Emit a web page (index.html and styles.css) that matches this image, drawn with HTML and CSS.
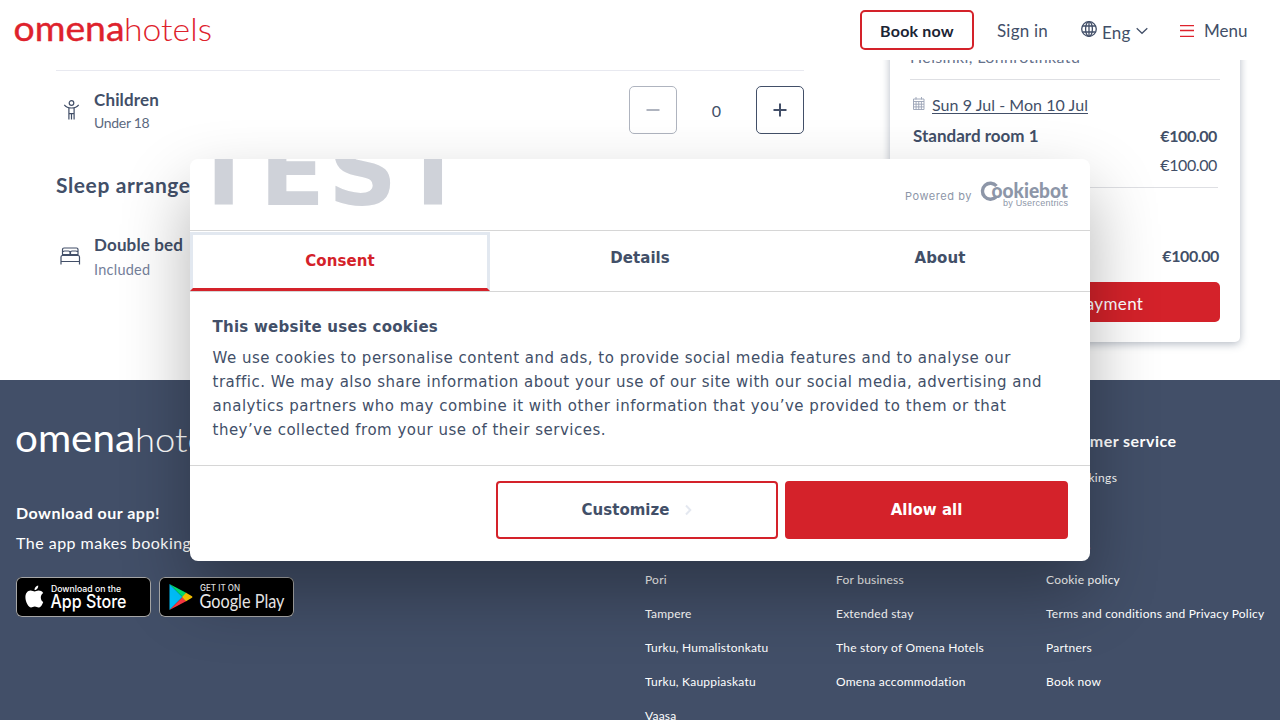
FILE: index.html
```html
<!DOCTYPE html>
<html lang="en">
<head>
<meta charset="utf-8">
<title>Omena Hotels</title>
<link rel="stylesheet" href="styles.css">
</head>
<body>
<header class="topbar">
  <svg class="logo" width="200" height="30" viewBox="0 0 200 30" role="img" aria-label="omenahotels">
    <text class="logo-bold" x="-.5" y="26" textLength="111" lengthAdjust="spacingAndGlyphs">omena</text>
    <text class="logo-thin" x="110" y="26" textLength="88" lengthAdjust="spacingAndGlyphs">hotels</text>
  </svg>
  <nav class="nav">
    <a class="book">Book now</a>
    <a class="signin">Sign in</a>
    <a class="lang">
      <svg width="16" height="16" viewBox="0 0 16 16" class="line globe"><circle cx="8" cy="8" r="7.3"/><ellipse cx="8" cy="8" rx="3.4" ry="7.3"/><path d="M8 .7v14.6M1.600 5h12.800M1.600 11h12.800"/></svg>
      <span class="lang-name">Eng</span>
      <svg width="12" height="8" viewBox="0 0 12 8" class="line"><path d="M.7 1.200 6 6.300l5.300-5.100"/></svg>
    </a>
    <a class="menu">
      <svg width="14" height="12" viewBox="0 0 14 12" class="line red"><path d="M0 .5h14M0 5.500h14M0 11.500h14"/></svg>
      <span>Menu</span>
    </a>
  </nav>
</header>

<main class="page">
  <section class="rooms">
    <div class="row guests">
      <svg class="kid line" width="17" height="22" viewBox="0 0 17 22"><circle cx="8.500" cy="4" r="2.300"/><path d="M1.300 5.800c2 2.700 4 3.200 7.200 3.200s5.200-.5 7.200-3.200M5.900 8.800V20.500M11.100 8.800V20.500M8.500 15v5.500M5.900 14.700h5.200"/></svg>
      <div class="label"><b>Children</b><small class="t-under">Under 18</small></div>
      <div class="stepper">
        <button class="step off"><svg width="14" height="14" viewBox="0 0 14 14"><path d="M.5 7h13"/></svg></button>
        <span>0</span>
        <button class="step"><svg width="14" height="14" viewBox="0 0 14 14"><path d="M.5 7h13M7 .5v13"/></svg></button>
      </div>
    </div>
    <h2>Sleep arrangements</h2>
    <div class="row bed">
      <svg class="line" width="21" height="18" viewBox="0 0 21 18"><path d="M2.500 9V2.500a1.500 1.500 0 0 1 1.500-1.500h12.500a1.500 1.500 0 0 1 1.500 1.500V9M3 5c0-.8.6-1 1.500-1h4c.8 0 1.500.2 1.500 1v1.500H10.500V5c0-.8.6-1 1.500-1h4c.9 0 1.500.3 1.500 1M2.500 7.500h15.500M1 17.500V10c0-1 .6-1.500 1.500-1.500h15.500c1 0 1.500.5 1.500 1.500v7.500M1 14.500h18.500"/></svg>
      <div class="label"><b>Double bed</b><small>Included</small></div>
    </div>
  </section>
  <aside class="card">
    <p class="place">Helsinki, Lönnrotinkatu</p>
    <p class="dates">
      <svg width="12" height="13" viewBox="0 0 12 13"><path d="M.5 2h10.500v10.500H.5zM.5 4.500h10.500M.5 7.200h10.500M.5 9.900h10.500M3.100 4.500v8M5.750 4.500v8M8.400 4.500v8M3 0v2.500M8.500 0v2.500"/></svg>
      <u>Sun 9 Jul - Mon 10 Jul</u>
    </p>
    <p class="line-item strong"><span class="t-room">Standard room 1</span><span class="price">€100.00</span></p>
    <p class="line-item sub"><span>1 night</span><span class="price">€100.00</span></p>
    <p class="line-item total"><span>Total</span><span class="price">€100.00</span></p>
    <button class="pay">Proceed to payment</button>
  </aside>
</main>

<footer class="footer">
  <section class="about">
    <svg class="logo white" width="214" height="30" viewBox="0 0 214 30" role="img" aria-label="omenahotels">
      <text class="logo-bold" x="-1" y="24" textLength="120" lengthAdjust="spacingAndGlyphs">omena</text>
      <text class="logo-thin" x="119" y="24" textLength="95" lengthAdjust="spacingAndGlyphs">hotels</text>
    </svg>
    <h3>Download our app!</h3>
    <p>The app makes booking easy</p>
    <div class="stores">
      <a class="store"><svg width="135" height="40" viewBox="0 0 135 40">
        <path fill="#fff" d="M24.800 20.300c0-2.200 1.200-3.500 2.400-4.400-1.100-1.600-2.900-2.400-4.600-2.400-1.800 0-3 1-4 1s-2.400-1-4-1c-3 .1-5.200 2.700-5.200 6.700 0 4.500 3 10.300 5.700 10.300 1.300 0 2-.9 3.700-.9s2.300.9 3.700.9c2.200 0 4.100-3.400 4.700-5.600-1.500-.7-2.400-2.300-2.400-4.600zM22.200 8.400c-1.900.2-3.900 2.200-3.700 4.600 2.100.1 4-2.200 3.700-4.600z"/>
        <text class="badge-s" x="35" y="15" textLength="70" lengthAdjust="spacingAndGlyphs">Download on the</text><text class="badge-l" x="34.500" y="31" textLength="76" lengthAdjust="spacingAndGlyphs">App Store</text></svg></a>
      <a class="store"><svg width="135" height="40" viewBox="0 0 135 40">
        <path fill="#00c3ff" d="M10.500 7v26l13-13z"/><path fill="#00e676" d="m10.500 7 13 13 4-4z"/><path fill="#ff3a44" d="m10.500 33 13-13 4 4z"/><path fill="#ffc800" d="m27 15.700 6 3.500q1 .8 0 1.600l-6 3.500-4-4.300z"/>
        <text class="badge-s" x="41" y="13.500" textLength="40" lengthAdjust="spacingAndGlyphs">GET IT ON</text><text class="badge-l play" x="40.500" y="30.500" textLength="85" lengthAdjust="spacingAndGlyphs">Google Play</text></svg></a>
    </div>
  </section>
  <ul class="links"><li class="head">Hotels</li><li>Helsinki</li><li>Jyväskylä</li><li>Oulu</li><li>Pori</li><li>Tampere</li><li>Turku, Humalistonkatu</li><li>Turku, Kauppiaskatu</li><li>Vaasa</li></ul>
  <ul class="links"><li class="head">Omena</li><li>Offers</li><li>Groups</li><li>Breakfast</li><li>For business</li><li>Extended stay</li><li>The story of Omena Hotels</li><li>Omena accommodation</li></ul>
  <ul class="links"><li class="head">Customer service</li><li class="bookings">My bookings</li><li>Contact</li><li>Invoices</li><li>Cookie policy</li><li>Terms and conditions and Privacy Policy</li><li>Partners</li><li>Book now</li></ul>
</footer>

<div class="dialog" role="dialog">
  <div class="brand">
    <div class="test">TEST</div>
    <div class="powered"><span>Powered by</span>
      <svg width="90" height="28" viewBox="0 0 90 28"><path d="M17.500 5A8 8 0 1 0 17 16" fill="none" stroke="#8d96a8" stroke-width="3.400"/><text class="cb" x="12.500" y="16.500" textLength="76.500" lengthAdjust="spacingAndGlyphs">ookiebot</text><text class="uc" x="24" y="25" textLength="65">by Usercentrics</text></svg>
    </div>
  </div>
  <div class="tabs"><div class="tab active">Consent</div><div class="tab">Details</div><div class="tab">About</div></div>
  <div class="copy">
    <h4>This website uses cookies</h4>
    <p>We use cookies to personalise content and ads, to provide social media features and to analyse our traffic. We may also share information about your use of our site with our social media, advertising and analytics partners who may combine it with other information that you’ve provided to them or that they’ve collected from your use of their services.</p>
  </div>
  <div class="actions">
    <button class="btn">Customize<svg width="7" height="12" viewBox="0 0 7 12"><path d="m1 1.500 4.300 4.500L1 10.500" fill="none" stroke="#e4e8f0" stroke-width="2"/></svg></button>
    <button class="btn primary">Allow all</button>
  </div>
</div>
</body>
</html>
```
FILE: styles.css
```css
* { box-sizing: border-box; }
body { margin: 0; width: 1280px; height: 720px; overflow: hidden; position: relative; background: #fff; color: #424f68; font: 16px/24px Lato, sans-serif; }
p, h2, h3, h4, ul { margin: 0; padding: 0; }
button { font: inherit; color: inherit; padding: 0; }
svg { display: block; flex: none; }
.line { fill: none; stroke: #424f68; stroke-width: 1.2; }
.line.red { stroke: #de222c; stroke-width: 1.4; }
.line.globe { stroke-width: 1.3; margin-top: -3px; }

.topbar { position: relative; z-index: 2; height: 60px; background: #fff; display: flex; justify-content: space-between; padding: 0 33px 0 14px; }
.logo { margin-top: 15px; fill: #de222c; overflow: visible; }
.logo.white { margin: 0; fill: #fff; }
.logo-bold { font: 400 35px Lato, sans-serif; stroke: #de222c; stroke-width: .4; }
.logo-thin { font: 300 31px Lato, sans-serif; }
.white .logo-bold { font-size: 38px; stroke: none; }
.white .logo-thin { font-size: 33px; }
.nav { display: flex; align-items: center; padding-top: 1px; }
.book { width: 114px; height: 40px; margin-top: -2px; border: 2px solid #d4222a; border-radius: 5px; display: grid; place-items: center; padding-top: 2px; font-weight: 700; color: #1b2434; letter-spacing: .2px; }
.signin { margin-left: 23px; width: 84px; font-size: 17px; letter-spacing: .2px; }
.lang { display: flex; align-items: center; width: 99px; }
.lang-name { margin: 4px 5px 0; width: 29px; font-size: 17px; letter-spacing: .2px; }
.menu { display: flex; align-items: center; gap: 10px; width: 67px; font-size: 17px; }

.page { display: grid; grid-template-columns: 748px 350px; gap: 86px; padding-left: 56px; height: 320px; }
.rooms { padding-top: 10px; }
.row { display: flex; }
.guests { border-top: 1px solid #e8e9f0; height: 79px; }
.kid { margin: 28px 0 0 7px; }
.guests .label { margin: 17px 0 0 14px; }
.label b, .label small { display: block; }
.label b { font-size: 17px; letter-spacing: .15px; }
.label small { font-size: 14px; line-height: 22px; color: #5c6980; }
.t-under { letter-spacing: -.3px; }
.stepper { margin: 15px 0 0 auto; display: flex; width: 175px; justify-content: space-between; align-items: center; }
.guests .stepper { height: 48px; }
.stepper span { padding-top: 2px; }
.step { width: 48px; height: 48px; border: 1px solid #424f68; border-radius: 5px; background: none; display: grid; place-items: center; }
.step svg { stroke: #424f68; stroke-width: 2; fill: none; }
.step.off { opacity: .42; }
h2 { font-size: 21px; line-height: 28px; margin-top: 22px; letter-spacing: .6px; }
.bed { margin-top: 34px; }
.bed > svg { margin: 14px 0 0 4px; }
.bed .label { margin-left: 13px; }
.bed small { margin-top: 2px; color: #74809a; font-size: 14.5px; letter-spacing: .25px; }

.card { margin-top: -20px; height: 302px; border-radius: 5px; background: #fff; box-shadow: 0 2px 8px rgba(66, 79, 104, .4); padding: 5px 20px 20px; }
.place { height: 35px; border-bottom: 1px solid #dedfe3; color: #66728c; letter-spacing: .37px; }
.dates { display: flex; gap: 7px; padding: 13px 3px 0; }
.dates svg { margin-top: 4px; fill: none; stroke: #9aa3b5; stroke-width: .9; }
.dates u { text-underline-offset: 2px; letter-spacing: .05px; }
.line-item { display: flex; justify-content: space-between; padding: 0 3px; }
.t-room { font-size: 17px; }
.price { letter-spacing: -.4px; }
.strong { padding-top: 7px; font-weight: 700; }
.sub { padding: 5px 1px 0 3px; height: 40px; border-bottom: 1px solid #dedfe3; margin-right: 2px; }
.total { padding: 56px 1px 0 3px; font-weight: 700; }
.pay { display: block; width: 310px; height: 40px; margin-top: 14px; border: 0; border-radius: 5px; background: #d4222a; color: #fff; padding-top: 3px; font-size: 17px; letter-spacing: .35px; }

.footer { display: grid; grid-template-columns: 629px 191px 210px 1fr; padding: 48px 0 0 16px; height: 340px; background: #424f68; color: #fff; overflow: hidden; }
h3 { font-size: 16px; line-height: 24px; margin-top: 43px; letter-spacing: .48px; }
.about p { margin-top: 6px; letter-spacing: .48px; }
.stores { display: flex; gap: 8px; margin-top: 22px; }
.store { width: 135px; height: 40px; border-radius: 6px; background: #000; box-shadow: inset 0 0 0 1px #a6a6a6; }
.store svg { fill: #fff; }
.badge-s { font: 500 8.5px Inter, sans-serif; }
.badge-l { font: 500 18px Inter, sans-serif; }
.play { font: 400 20px Lato, sans-serif; }
.links { list-style: none; font-size: 12px; line-height: 34px; letter-spacing: .23px; white-space: nowrap; }
.links .head { font-size: 16px; font-weight: 700; line-height: 26px; margin-bottom: 7px; letter-spacing: .45px; }
.links .bookings { letter-spacing: .35px; }

.dialog { position: absolute; z-index: 5; left: 190px; top: 159px; width: 900px; height: 402px; border-radius: 8px; background: #fff; box-shadow: 0 32px 68px rgba(0, 0, 0, .3); font: 15px/24px "DejaVu Sans", sans-serif; letter-spacing: .5px; overflow: hidden; }
.brand { height: 72px; border-bottom: 1px solid #d6d6d6; display: flex; justify-content: space-between; overflow: hidden; }
.test { font-size: 96px; font-weight: 700; line-height: 96px; margin: -35px 0 0 1px; letter-spacing: 3px; color: #cfd2d9; }
.powered { display: flex; padding: 22px 21px 0 0; gap: 7px; font: 11px/30px Inter, sans-serif; letter-spacing: .55px; color: #8d96a8; }
.powered svg { fill: #8d96a8; letter-spacing: 0; }
.cb { font: 900 20px Lato, sans-serif; }
.uc { font: 9px "Liberation Sans", sans-serif; }
.tabs { display: grid; grid-template-columns: repeat(3, 1fr); height: 61px; border-bottom: 1px solid #d6d6d6; font-weight: 700; text-align: center; letter-spacing: .08px; }
.tab { padding-top: 15px; }
.tab.active { color: #d4222a; border: 3px solid #e2e8f0; border-bottom-color: #d4222a; margin-top: 1px; padding-top: 14px; }
.copy { height: 174px; padding: 23px 22px 0 22.5px; border-bottom: 1px solid #d6d6d6; }
h4 { font-size: 15px; line-height: 24px; margin-bottom: 7px; letter-spacing: .25px; }
.actions { display: flex; justify-content: flex-end; gap: 7px; padding: 15px 22px 0 0; }
.btn { width: 282px; height: 58px; border: 2px solid #d4222a; border-radius: 4px; background: #fff; font-weight: 700; display: flex; align-items: center; justify-content: center; gap: 16px; letter-spacing: 0; }
.btn.primary { width: 283px; background: #d4222a; color: #fff; }
```
